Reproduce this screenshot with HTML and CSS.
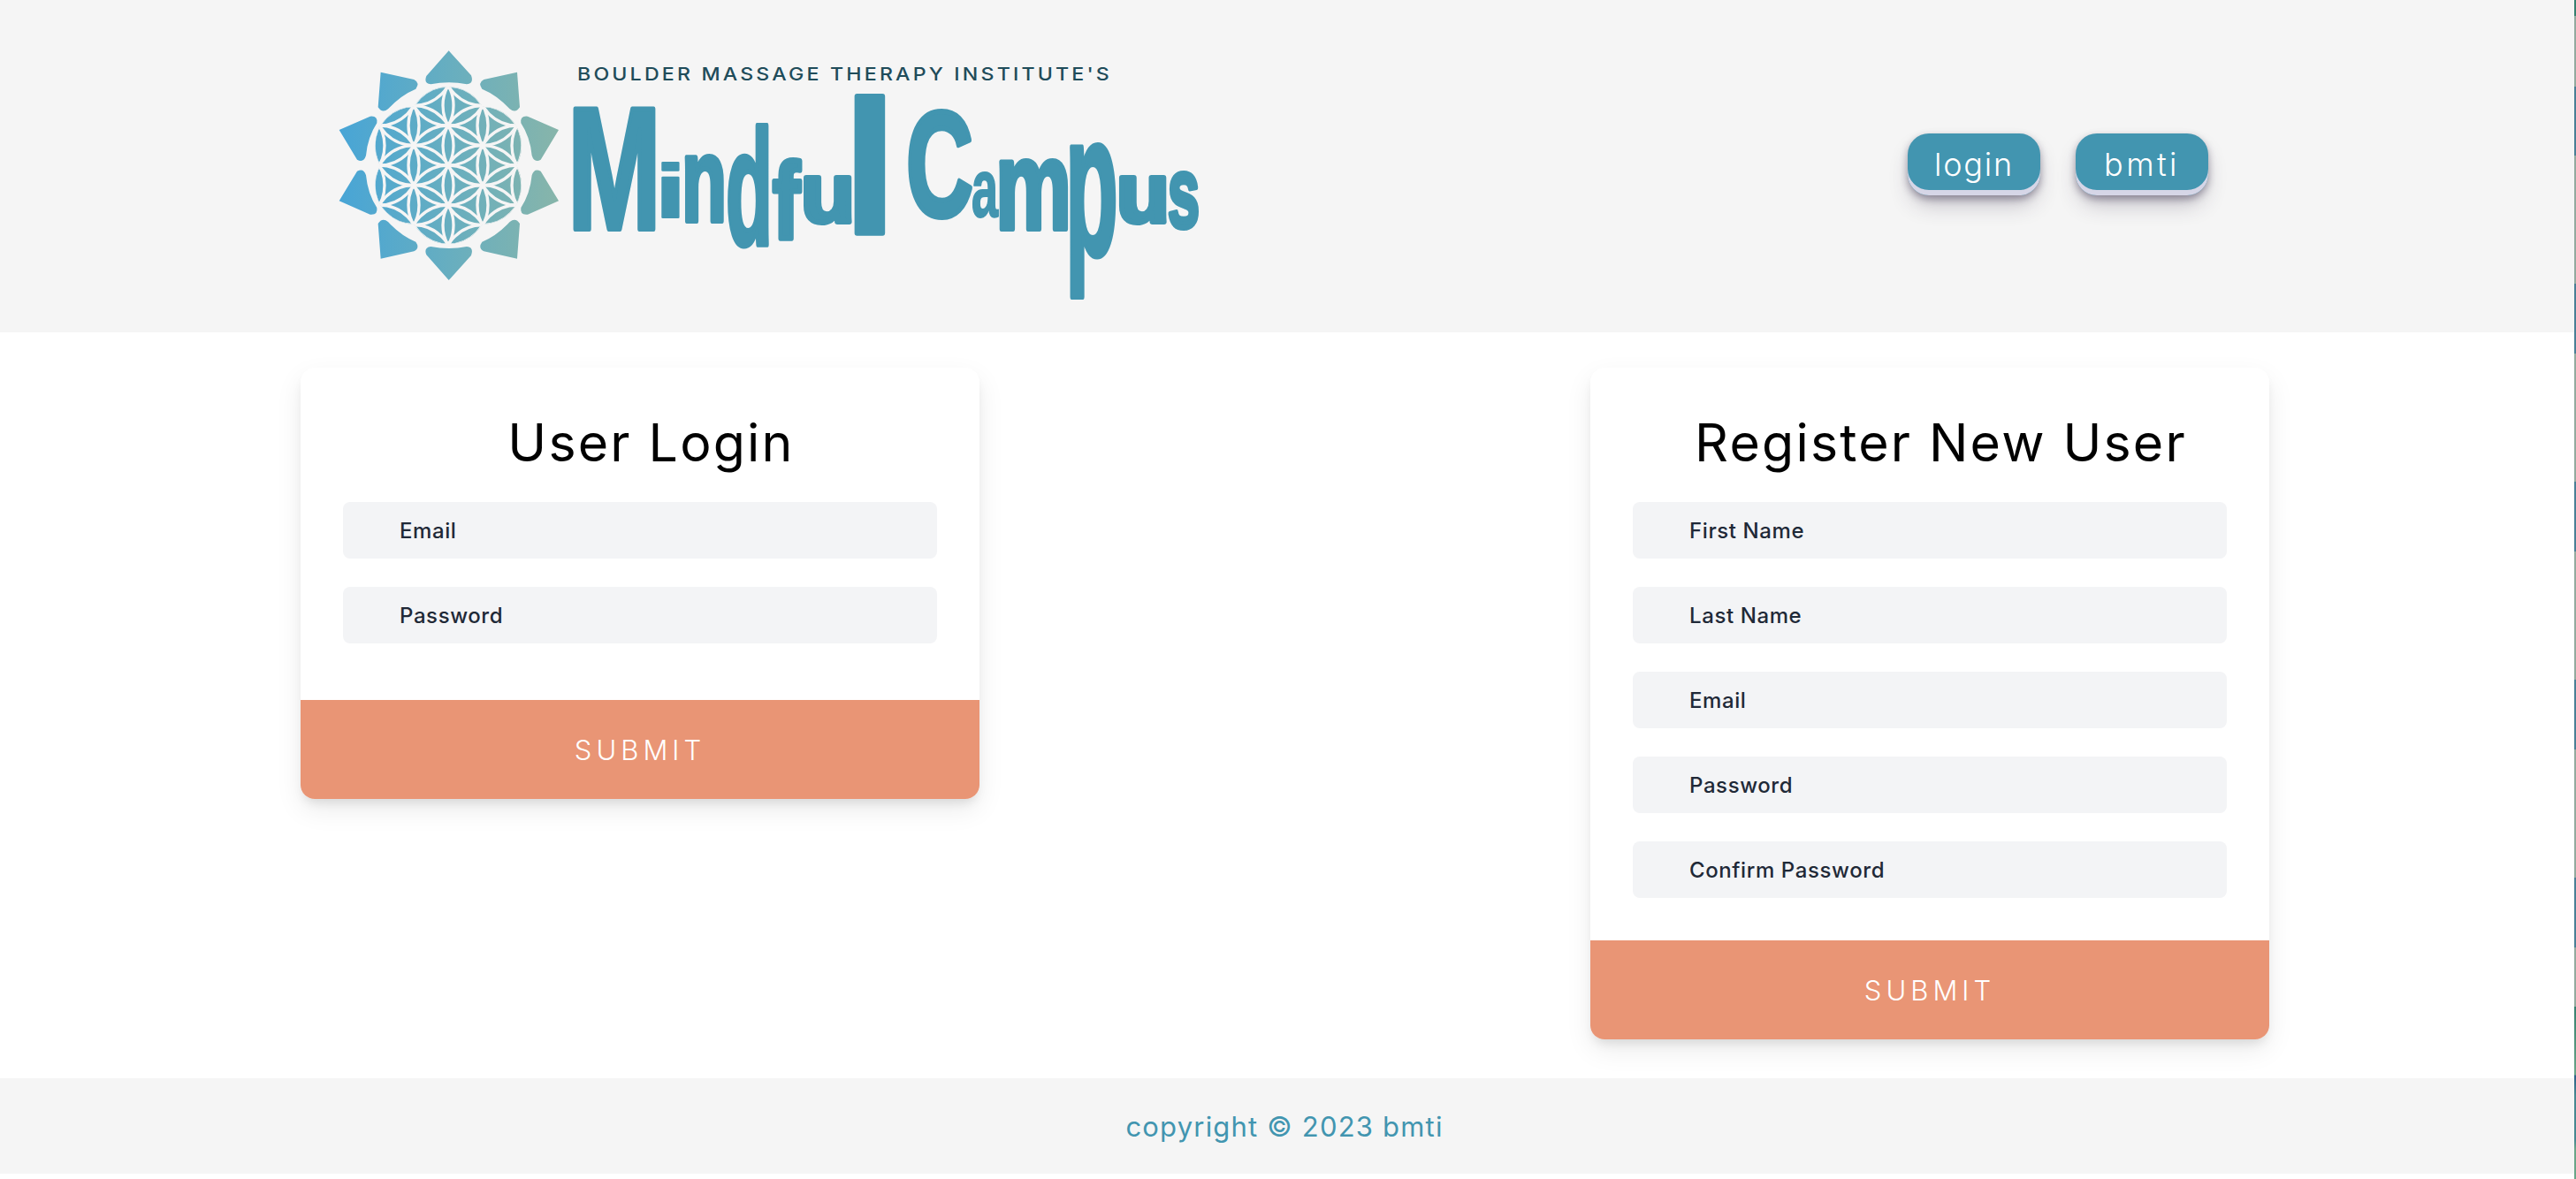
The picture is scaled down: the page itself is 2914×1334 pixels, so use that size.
FILE: index.html
```html
<!DOCTYPE html>
<html lang="en">
<head>
<meta charset="utf-8">
<title>Mindful Campus</title>
<link rel="stylesheet" href="styles.css">
</head>
<body>
<header class="site-header">
  <svg class="logo" viewBox="380 50 985 295" role="img" aria-label="Boulder Massage Therapy Institute's Mindful Campus">
    <defs>
      <linearGradient id="sea" gradientUnits="userSpaceOnUse" x1="41" y1="0" x2="786" y2="0">
        <stop offset="0" stop-color="#48a5d6"/>
        <stop offset=".5" stop-color="#67aec0"/>
        <stop offset="1" stop-color="#87b5aa"/>
      </linearGradient>
      <linearGradient id="sea-flip" gradientUnits="userSpaceOnUse" x1="786" y1="0" x2="41" y2="0">
        <stop offset="0" stop-color="#48a5d6"/>
        <stop offset=".5" stop-color="#67aec0"/>
        <stop offset="1" stop-color="#87b5aa"/>
      </linearGradient>
      <clipPath id="flower">
        <circle cx="411" cy="441" r="133"/><circle cx="411" cy="308" r="133"/><circle cx="411" cy="575" r="133"/>
        <circle cx="296" cy="375" r="133"/><circle cx="296" cy="508" r="133"/><circle cx="527" cy="375" r="133"/><circle cx="527" cy="508" r="133"/>
      </clipPath>
      <path id="ray-a" d="M182 125L295 150Q316 161 301 182Q250 203 207 250Q187 266 173 244Z"/>
      <path id="ray-b" d="M41 321L146 275Q173 272 169 298Q138 345 132 408Q124 434 102 422Z"/>
      <g id="rays">
        <path d="M413 52L489 136Q499 164 474 166Q413 154 352 166Q327 163 337 138Z"/>
        <use href="#ray-a"/>
        <use href="#ray-b"/>
        <g transform="translate(827 0) scale(-1 1)" fill="url(#sea-flip)">
          <use href="#ray-a"/>
          <use href="#ray-b"/>
        </g>
      </g>
    </defs>
    <g transform="translate(370 40) scale(.33333)" fill="url(#sea)">
      <use href="#rays"/>
      <use href="#rays" transform="translate(0 883) scale(1 -1)"/>
      <g clip-path="url(#flower)">
        <rect x="41" y="160" width="745" height="560"/>
        <g class="rings">
          <circle cx="411" cy="171" r="135"/><circle cx="411" cy="306" r="135"/><circle cx="411" cy="441" r="135"/><circle cx="411" cy="576" r="135"/><circle cx="411" cy="711" r="135"/>
          <circle cx="294" cy="103" r="135"/><circle cx="294" cy="238" r="135"/><circle cx="294" cy="374" r="135"/><circle cx="294" cy="509" r="135"/><circle cx="294" cy="644" r="135"/><circle cx="294" cy="779" r="135"/>
          <circle cx="528" cy="103" r="135"/><circle cx="528" cy="238" r="135"/><circle cx="528" cy="374" r="135"/><circle cx="528" cy="509" r="135"/><circle cx="528" cy="644" r="135"/><circle cx="528" cy="779" r="135"/>
          <circle cx="177" cy="171" r="135"/><circle cx="177" cy="306" r="135"/><circle cx="177" cy="441" r="135"/><circle cx="177" cy="576" r="135"/><circle cx="177" cy="711" r="135"/>
          <circle cx="645" cy="171" r="135"/><circle cx="645" cy="306" r="135"/><circle cx="645" cy="441" r="135"/><circle cx="645" cy="576" r="135"/><circle cx="645" cy="711" r="135"/>
          <circle cx="60" cy="374" r="135"/><circle cx="60" cy="509" r="135"/><circle cx="762" cy="374" r="135"/><circle cx="762" cy="509" r="135"/>
        </g>
      </g>
    </g>
    <text class="tagline" x="653" y="91.3" textLength="605" lengthAdjust="spacingAndGlyphs">BOULDER MASSAGE THERAPY INSTITUTE'S</text>
    <text class="wordmark"><tspan x="642" y="259" font-size="197" textLength="106" lengthAdjust="spacingAndGlyphs">M</tspan><tspan class="thin" x="741" y="246" font-size="85" textLength="35" lengthAdjust="spacingAndGlyphs">i</tspan><tspan x="771" y="250" font-size="136" textLength="51" lengthAdjust="spacingAndGlyphs">n</tspan><tspan x="821" y="277" font-size="186" textLength="53" lengthAdjust="spacingAndGlyphs">d</tspan><tspan x="874" y="270" font-size="122" textLength="31" lengthAdjust="spacingAndGlyphs">f</tspan><tspan x="906" y="251" font-size="94" textLength="61" lengthAdjust="spacingAndGlyphs">u</tspan><tspan x="955" y="264" font-size="214" textLength="58" lengthAdjust="spacingAndGlyphs">l</tspan> <tspan x="1025" y="244" font-size="168" textLength="76" lengthAdjust="spacingAndGlyphs">C</tspan><tspan class="thin" x="1099" y="245" font-size="92" textLength="30" lengthAdjust="spacingAndGlyphs">a</tspan><tspan x="1126" y="259" font-size="143" textLength="86" lengthAdjust="spacingAndGlyphs">m</tspan><tspan x="1205" y="288" font-size="230" textLength="60" lengthAdjust="spacingAndGlyphs">p</tspan><tspan x="1263" y="251" font-size="94" textLength="60" lengthAdjust="spacingAndGlyphs">u</tspan><tspan x="1321" y="257" font-size="113" textLength="36" lengthAdjust="spacingAndGlyphs">s</tspan></text>
  </svg>
  <nav class="nav">
    <a class="nav-button">login</a>
    <a class="nav-button nav-button-wide">bmti</a>
  </nav>
</header>
<main class="forms">
  <form class="card">
    <div class="card-body card-body-login">
      <h1 class="title">User Login</h1>
      <div class="field">Email</div>
      <div class="field">Password</div>
    </div>
    <button class="submit" type="button">SUBMIT</button>
  </form>
  <form class="card">
    <div class="card-body">
      <h1 class="title">Register New User</h1>
      <div class="field">First Name</div>
      <div class="field">Last Name</div>
      <div class="field">Email</div>
      <div class="field">Password</div>
      <div class="field">Confirm Password</div>
    </div>
    <button class="submit" type="button">SUBMIT</button>
  </form>
</main>
<footer class="site-footer">copyright © 2023 bmti</footer>
<div class="edge"></div>
</body>
</html>
```
FILE: styles.css
```css
* { box-sizing: border-box; }

body {
  margin: 0;
  height: 1334px;
  position: relative;
  overflow: hidden;
  background: #fff;
  font-family: Inter, "Open Sans", sans-serif;
}

.site-header {
  display: flex;
  justify-content: space-between;
  align-items: flex-start;
  height: 376px;
  padding: 50px 416px 0 380px;
  background: #f5f5f5;
}

.logo { display: block; width: 985px; height: 295px; overflow: visible; }

.rings circle { fill: none; stroke: #f5f5f5; stroke-width: 10; }

.tagline {
  font-size: 20.5px;
  font-weight: 500;
  letter-spacing: 2.8px;
  fill: #1f4c5a;
}

.wordmark {
  font-family: "Liberation Sans", Arial, sans-serif;
  font-weight: 700;
  fill: #4295b0;
  stroke: #4295b0;
  stroke-width: 6;
  stroke-linejoin: round;
}

.thin { stroke-width: 2; }

.nav { display: flex; gap: 40px; margin-top: 101px; }

.nav-button {
  display: flex;
  align-items: center;
  justify-content: center;
  width: 150px;
  height: 70px;
  border-radius: 24px;
  background: #4295b0;
  color: #fff;
  font-size: 36px;
  font-weight: 300;
  letter-spacing: 1.8px;
  box-shadow: rgba(45, 35, 66, .4) 0 4px 8px, rgba(45, 35, 66, .3) 0 14px 26px -6px, #d6d6e7 0 -6px 0 inset;
}

.nav-button-wide { letter-spacing: 3.4px; }

.forms {
  display: flex;
  justify-content: space-between;
  align-items: flex-start;
  height: 844px;
  padding: 40px 347px 0 340px;
}

.card {
  width: 768px;
  overflow: hidden;
  border-radius: 16px;
  background: #fff;
  box-shadow: 0 12px 30px rgba(0, 0, 0, .08), 0 8px 12px -4px rgba(0, 0, 0, .1);
}

.card-body {
  display: flex;
  flex-direction: column;
  gap: 32px;
  padding: 48px;
}

.card-body-login { padding-bottom: 64px; }

.title {
  height: 72px;
  margin: 0;
  padding-left: 25px;
  color: #000;
  font-size: 59px;
  font-weight: 380;
  letter-spacing: 2.2px;
  line-height: 74px;
  text-align: center;
  white-space: nowrap;
}

.field {
  height: 64px;
  padding-left: 64px;
  border-radius: 8px;
  background: #f3f4f6;
  color: #1f2937;
  font-size: 24px;
  font-weight: 450;
  letter-spacing: .6px;
  line-height: 65px;
}

.submit {
  display: block;
  width: 100%;
  height: 112px;
  padding: 0;
  border: 0;
  background: #e99575;
  color: #fff;
  font-family: inherit;
  font-size: 31px;
  font-weight: 300;
  letter-spacing: 5px;
}

.site-footer {
  height: 108px;
  padding-right: 8px;
  background: #f5f5f5;
  color: #4295b0;
  font-size: 31px;
  font-weight: 380;
  letter-spacing: 1.2px;
  line-height: 109px;
  text-align: center;
}

.edge {
  position: absolute;
  top: 0;
  right: 0;
  width: 2px;
  height: 100%;
  background: linear-gradient(#35806f 0 18px, #93aa9f 18px 98px, #4a7f96 98px 176px, #93aa9f 176px 321px, #4a7f96 321px 400px, #93aa9f 400px 545px, #4a7f96 545px 624px, #93aa9f 624px 769px, #4a7f96 769px 848px, #93aa9f 848px 993px, #4a7f96 993px 1072px, #93aa9f 1072px 1139px, #35806f 1139px, #6aa588 1216px, #2b6088 1217px, #478891 1240px 1290px, #6aa588 1300px);
}
```
